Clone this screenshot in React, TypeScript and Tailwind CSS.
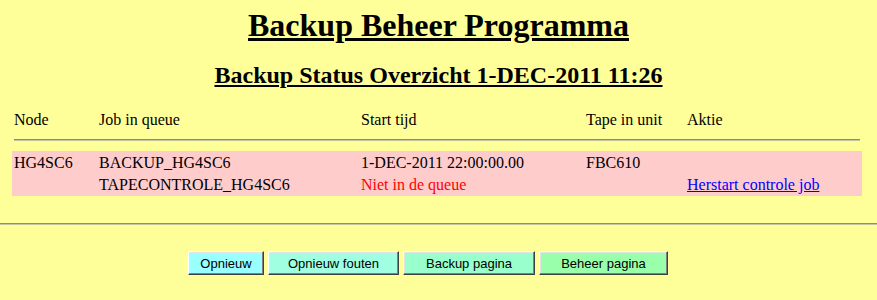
import React from "react";

const serif = { fontFamily: '"Liberation Serif", "Times New Roman", serif' };

const cols = "grid grid-cols-[85px_262px_225px_101px_177px]";

function Cell({ children, className = "" }: { children?: React.ReactNode; className?: string }) {
  return <div className={`px-[2px] whitespace-nowrap ${className}`}>{children}</div>;
}

function Btn({ label, w, bg }: { label: string; w: string; bg: string }) {
  return (
    <button
      className={`${w} ${bg} h-[24px] text-[13px] leading-none text-black border border-t-white border-l-white border-r-[#404040] border-b-[#404040] shadow-[inset_-1px_-1px_0_#808080,inset_1px_1px_0_#e4e4e4] flex items-center justify-center`}
      style={{ fontFamily: '"Liberation Sans", Arial, sans-serif' }}
    >
      {label}
    </button>
  );
}

export default function App() {
  return (
    <div className="w-full min-h-[300px] bg-[#FFFF99] text-black pt-[7px]" style={serif}>
      <h1 className="text-center text-[32px] leading-[36px] font-bold underline">Backup Beheer Programma</h1>
      <h2 className="mt-[18px] text-center text-[24px] leading-[28px] font-bold underline">
        Backup Status Overzicht 1-DEC-2011 11:26
      </h2>

      <div className="ml-[12px] w-[850px] mt-[20px] text-[16px]">
        <div className={`${cols} leading-[22px]`}>
          <Cell>Node</Cell>
          <Cell>Job in queue</Cell>
          <Cell>Start tijd</Cell>
          <Cell>Tape in unit</Cell>
          <Cell>Aktie</Cell>
        </div>
        <div className="mx-[2px] mt-[8px] h-[2px] border-t border-t-[#8a8a8a] border-b border-b-[#c4c4a0]" />
        <div className="mt-[10px] bg-[#FFCCCC]">
          <div className={`${cols} leading-[23px]`}>
            <Cell>HG4SC6</Cell>
            <Cell>BACKUP_HG4SC6</Cell>
            <Cell>1-DEC-2011 22:00:00.00</Cell>
            <Cell>FBC610</Cell>
            <Cell></Cell>
          </div>
          <div className={`${cols} leading-[22px]`}>
            <Cell></Cell>
            <Cell>TAPECONTROLE_HG4SC6</Cell>
            <Cell className="text-[#FF0000]">Niet in de queue</Cell>
            <Cell></Cell>
            <Cell>
              <a href="#" className="text-[#0000FF] underline">
                Herstart controle job
              </a>
            </Cell>
          </div>
        </div>
      </div>

      <div className="mt-[27px] h-[2px] border-t border-t-[#8a8a8a] border-b border-b-[#c4c4a0]" />

      <div className="mt-[26px] flex justify-center gap-[4px] pr-[21px]">
        <Btn label="Opnieuw" w="w-[76px]" bg="bg-[#99FFFF]" />
        <Btn label="Opnieuw fouten" w="w-[131px]" bg="bg-[#A0FFE0]" />
        <Btn label="Backup pagina" w="w-[132px]" bg="bg-[#99FFCC]" />
        <Btn label="Beheer pagina" w="w-[129px]" bg="bg-[#99FFAA]" />
      </div>
    </div>
  );
}
